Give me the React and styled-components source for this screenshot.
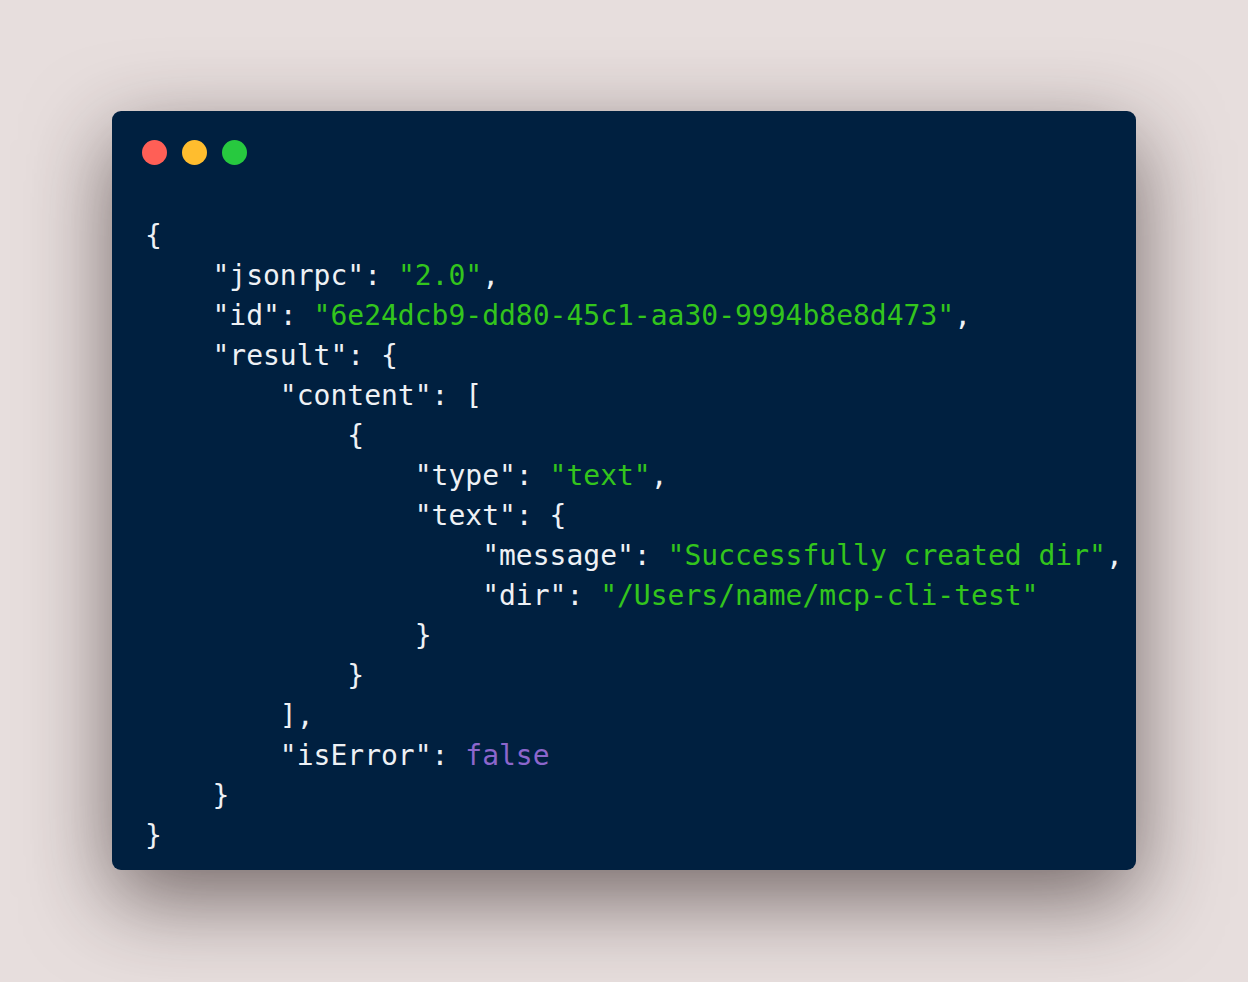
import React from 'react'
import styled, { createGlobalStyle } from 'styled-components'

const Global = createGlobalStyle`
  html, body {
    margin: 0;
    padding: 0;
    background: #e7dedd;
  }
`

const Page = styled.div`
  width: 1248px;
  height: 982px;
  padding-top: 111px;
  padding-left: 112px;
  box-sizing: border-box;
  background: #e7dedd;
`

const Window = styled.div`
  width: 1024px;
  height: 759px;
  box-sizing: border-box;
  background: #002040;
  border-radius: 9px;
  box-shadow: 0 28px 85px rgba(40, 25, 25, 0.6);
  padding: 29px 0 0 30px;
  display: flex;
  flex-direction: column;
`

const Lights = styled.div`
  display: flex;
  gap: 15px;
`

const Light = styled.span`
  width: 25px;
  height: 25px;
  border-radius: 50%;
  background: ${p => p.color};
`

const Code = styled.pre`
  margin: 51px 0 0 3px;
  font-family: "DejaVu Sans Mono", "Liberation Mono", monospace;
  font-size: 28px;
  line-height: 40px;
  color: #eef1f5;
`

const Str = styled.span`
  color: #33c51c;
`

const Bool = styled.span`
  color: #8c66cc;
`

export default function App() {
  return (
    <Page>
      <Global />
      <Window>
        <Lights>
          <Light color="#ff5f56" />
          <Light color="#ffbd2e" />
          <Light color="#27c93f" />
        </Lights>
        <Code>
{`{
    "jsonrpc": `}<Str>"2.0"</Str>{`,
    "id": `}<Str>"6e24dcb9-dd80-45c1-aa30-9994b8e8d473"</Str>{`,
    "result": {
        "content": [
            {
                "type": `}<Str>"text"</Str>{`,
                "text": {
                    "message": `}<Str>"Successfully created dir"</Str>{`,
                    "dir": `}<Str>"/Users/name/mcp-cli-test"</Str>{`
                }
            }
        ],
        "isError": `}<Bool>false</Bool>{`
    }
}`}
        </Code>
      </Window>
    </Page>
  )
}
